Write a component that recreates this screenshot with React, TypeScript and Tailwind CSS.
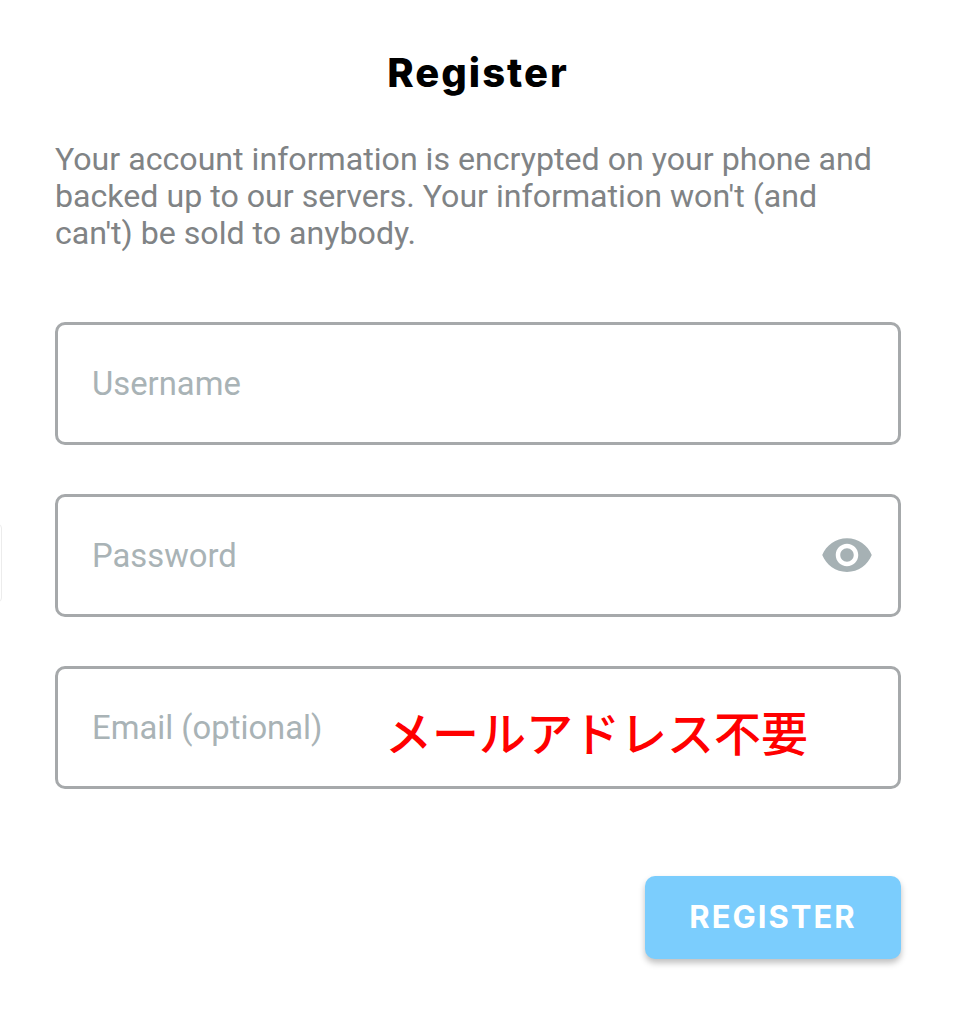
import { MdVisibility } from 'react-icons/md'

const inputCls =
  "w-full h-full bg-transparent outline-none pl-[34px] text-[32.8px] text-[#333] font-['Roboto',sans-serif] placeholder:text-[#a9b3b6]"

function Field({ placeholder, children }: { placeholder: string; children?: React.ReactNode }) {
  return (
    <div className="relative h-[123px] rounded-[10px] border-[3px] border-[#a6a9ab]">
      <input className={inputCls} placeholder={placeholder} />
      {children}
    </div>
  )
}

export default function App() {
  return (
    <div className="relative w-[956px] h-[1024px] bg-white overflow-hidden px-[55px]">
      {/* edge handle on the left */}
      <div className="absolute left-[-6px] top-[524px] w-[8px] h-[78px] rounded-[4px] border border-[#ececec]" />

      <h1 className="pt-[50px] text-center text-[40px] leading-[46px] font-extrabold tracking-[2px] text-black font-['Inter',sans-serif]">
        Register
      </h1>

      <p className="mt-[45px] text-[32.15px] leading-[37px] text-[#808385] font-['Roboto',sans-serif]">
        Your account information is encrypted on your phone and backed up to our servers. Your
        information won't (and can't) be sold to anybody.
      </p>

      <div className="mt-[70px] flex flex-col gap-[49px]">
        <Field placeholder="Username" />
        <Field placeholder="Password">
          <MdVisibility className="absolute right-[24px] top-[31px] text-[#a6b1b4]" size={54} />
        </Field>
        <Field placeholder="Email (optional)" />
      </div>

      <div className="mt-[87px] flex justify-end">
        <button className="w-[256px] h-[83px] rounded-[10px] bg-[#7bcdfd] text-white text-[31px] font-bold tracking-[2px] shadow-[0_4px_6px_rgba(0,0,0,0.25)] font-['Inter',sans-serif]">
          REGISTER
        </button>
      </div>

      {/* annotation over the email field */}
      <span className="absolute left-[385px] top-[701px] text-[47px] leading-[60px] font-medium text-[#ff0000] whitespace-nowrap font-['Noto_Sans_CJK_JP',sans-serif]">
        メールアドレス不要
      </span>
    </div>
  )
}
